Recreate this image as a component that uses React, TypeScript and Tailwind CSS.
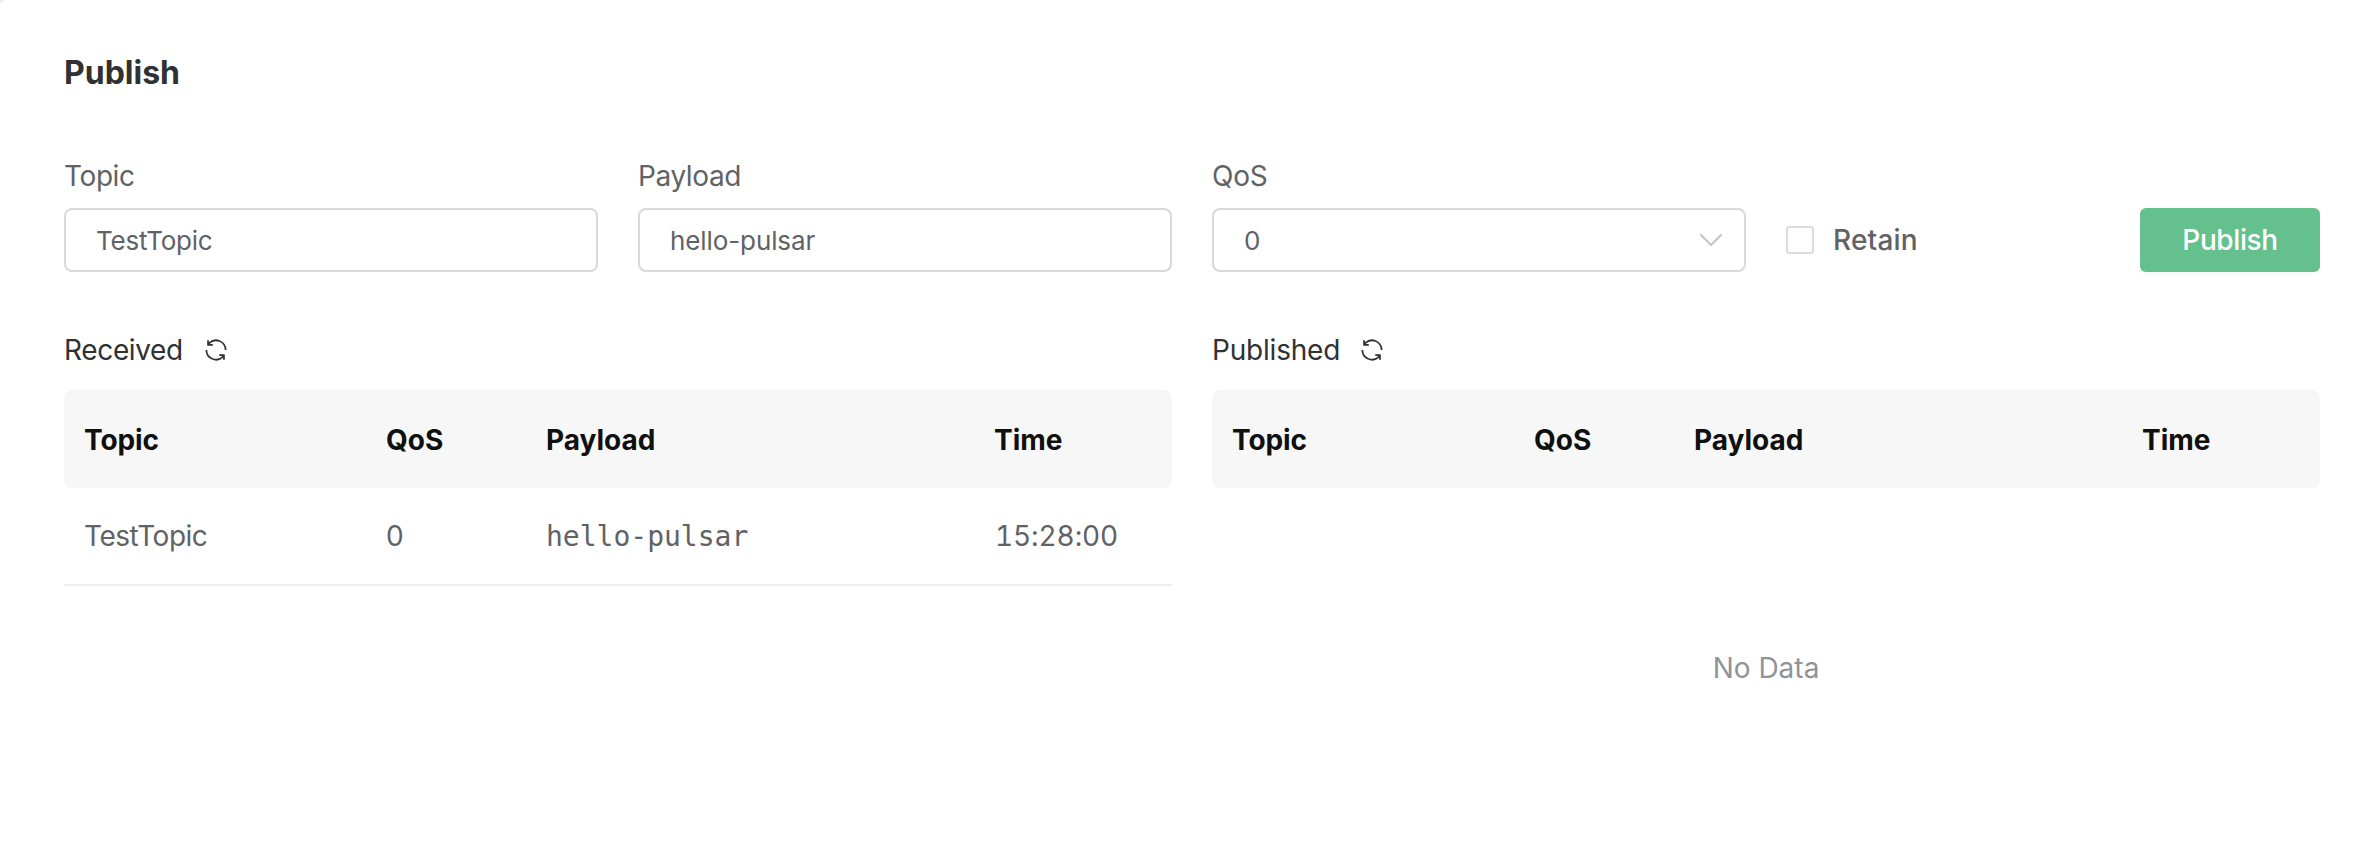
import type { ReactNode } from "react";

function RefreshIcon() {
  return (
    <svg viewBox="0 0 1024 1024" className="h-7 w-7" fill="currentColor">
      <path d="M771.776 794.88A384 384 0 0 1 128 512h64a320 320 0 0 0 555.712 216.448H654.72a32 32 0 1 1 0-64h149.056a32 32 0 0 1 32 32v148.928a32 32 0 1 1-64 0v-50.56zM276.288 295.616h92.992a32 32 0 0 1 0 64H220.16a32 32 0 0 1-32-32V178.56a32 32 0 0 1 64 0v50.56A384 384 0 0 1 896.128 512h-64a320 320 0 0 0-555.776-216.384z" />
    </svg>
  );
}

function Field({ label, children }: { label: ReactNode; children: ReactNode }) {
  return (
    <div className="w-[534px]">
      <div className="mb-2.5 h-11 text-[28px] leading-[44px] text-[#606266]">{label}</div>
      <div className="flex h-16 items-center justify-between rounded-lg border-2 border-[#d9d9d9] bg-white px-[30px] text-[26px] leading-[61px] text-[#606266]">
        {children}
      </div>
    </div>
  );
}

const columns = "grid grid-cols-[302px_160px_448px_1fr] pl-5";

function MessageTable({ title, children }: { title: ReactNode; children: ReactNode }) {
  return (
    <section className="w-[1108px] shrink-0">
      <div className="mb-[18px] flex h-11 items-center gap-[18px] text-[28px] leading-[44px] text-[#303133]">
        {title}
        <RefreshIcon />
      </div>
      <div className={`${columns} h-[98px] rounded-lg bg-[#f7f7f7] pt-0.5 text-[28px] leading-[96px] font-bold text-[#101010]`}>
        <span className="tracking-[-0.1px]">Topic</span>
        <span>QoS</span>
        <span>Payload</span>
        <span>Time</span>
      </div>
      {children}
    </section>
  );
}

export default function App() {
  return (
    <div className="h-[842px] w-[2380px] bg-[#efeff1] font-['Inter','Liberation_Sans',sans-serif]">
      <main className="h-full rounded-tl-md bg-white pt-[53px] pr-[60px] pl-16">
        <h1 className="text-[32px] leading-[39px] font-bold text-[#303133]">Publish</h1>

        <div className="mt-[62px] flex items-end">
          <div className="flex gap-10">
            <Field label={<span className="tracking-[-0.4px]">Topic</span>}>
              <span className="tracking-[-0.25px]">TestTopic</span>
            </Field>
            <Field label={<span className="tracking-[-0.4px]">Payload</span>}>
              <span className="tracking-[-0.1px]">hello-pulsar</span>
            </Field>
            <Field label={<span className="tracking-[-0.2px]">QoS</span>}>
              <span>0</span>
              <svg viewBox="0 0 22 13" className="-mr-2 h-[13px] w-[22px]" fill="none" stroke="#c0c4cc" strokeWidth="2" strokeLinecap="round" strokeLinejoin="round">
                <path d="M1 1l10 10L21 1" />
              </svg>
            </Field>
          </div>
          <label className="ml-10 flex h-16 items-center gap-[19px] text-[28px] leading-[64px] font-medium tracking-[0.2px] text-[#606266]">
            <span className="h-7 w-7 rounded border-2 border-[#dcdcdc] bg-white" />
            <span>Retain</span>
          </label>
          <button className="ml-auto h-16 w-[180px] rounded-md bg-[#64c08c] text-center text-[28px] leading-[64px] font-medium tracking-[-0.4px] text-white shadow-[0_4px_0_rgba(0,0,0,0.015)]">
            Publish
          </button>
        </div>

        <div className="mt-14 flex gap-10">
          <MessageTable title={<span className="mr-px tracking-[-0.35px]">Received</span>}>
            <div className={`${columns} h-[98px] border-b-2 border-[#ebeef5] text-[28px] leading-[96px] text-[#606266]`}>
              <span className="tracking-[-0.5px]">TestTopic</span>
              <span>0</span>
              <span className="pt-px font-['DejaVu_Sans_Mono',monospace]">hello-pulsar</span>
              <span className="pl-px tracking-[-0.1px] tabular-nums">15:28:00</span>
            </div>
          </MessageTable>
          <MessageTable title={<span className="tracking-[-0.2px]">Published</span>}>
            <div className="h-[346px] text-center text-[28px] leading-[360px] text-[#909399]">No Data</div>
          </MessageTable>
        </div>
      </main>
    </div>
  );
}
